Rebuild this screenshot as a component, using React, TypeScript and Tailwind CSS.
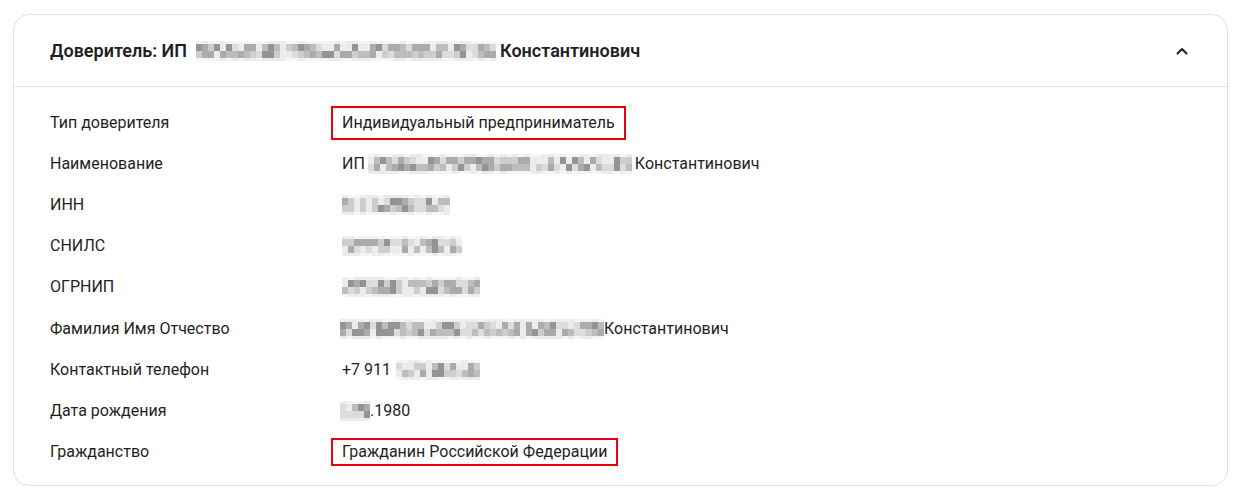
import React from 'react';

// pseudo-random shades for the pixelated (hidden) fragments
const shades = ['bg-[#f5f5f5]', 'bg-[#ececec]', 'bg-[#dcdcdc]', 'bg-[#cdcdcd]', 'bg-[#bdbdbd]', 'bg-[#ababab]', 'bg-[#949494]'];

const rand = (seed: number) => {
    const x = Math.sin(seed * 12.9898 + 78.233) * 43758.5453;
    return x - Math.floor(x);
};

const bands = [
    { h: 'h-[3px]', from: 0, span: 2 },
    { h: 'h-[7px]', from: 1, span: 6 },
    { h: 'h-[7px]', from: 1, span: 6 },
    { h: 'h-[3px]', from: 0, span: 2 },
];

const Mosaic: React.FC<{ width: number; seed: number; className?: string }> = ({ width, seed, className }) => {
    const cols = Math.round(width / 6);
    return (
        <span className={`inline-flex flex-col align-middle ${className ?? ''}`}>
            {bands.map((band, r) => (
                <span key={r} className="flex">
                    {Array.from({ length: cols }).map((_, c) => {
                        const v = rand(seed * 1000 + r * 97 + c);
                        const idx = Math.min(shades.length - 1, band.from + Math.floor(v * band.span));
                        return <span key={c} className={`w-[6px] ${band.h} ${shades[idx]}`} />;
                    })}
                </span>
            ))}
        </span>
    );
};

const ChevronUp = () => (
    <svg width="14" height="14" viewBox="0 0 14 14" fill="none">
        <path d="M2.5 9.5L7 5L11.5 9.5" stroke="#1f1f22" strokeWidth="2" strokeLinecap="round" strokeLinejoin="round" />
    </svg>
);

const Marked: React.FC<{ children: React.ReactNode; tall?: boolean }> = ({ children, tall }) => (
    <span className={`-ml-[11px] border-2 border-[#e8000b] px-[9px] ${tall ? 'py-[3px]' : 'py-0'}`}>{children}</span>
);

const App: React.FC = () => {
    const rows: { label: string; value: React.ReactNode }[] = [
        { label: 'Тип доверителя', value: <Marked tall>Индивидуальный предприниматель</Marked> },
        { label: 'Наименование', value: <span className="flex items-center">ИП<Mosaic width={266} seed={2} className="ml-[3px] mr-[3px]" />Константинович</span> },
        { label: 'ИНН', value: <Mosaic width={110} seed={3} /> },
        { label: 'СНИЛС', value: <Mosaic width={121} seed={4} /> },
        { label: 'ОГРНИП', value: <Mosaic width={140} seed={5} /> },
        { label: 'Фамилия Имя Отчество', value: <span className="flex items-center"><Mosaic width={266} seed={6} className="-ml-[2px]" />Константинович</span> },
        { label: 'Контактный телефон', value: <span className="flex items-center">+7 911<Mosaic width={81} seed={7} className="ml-[5px]" /></span> },
        { label: 'Дата рождения', value: <span className="flex items-center"><Mosaic width={30} seed={8} className="-ml-[2px]" />.1980</span> },
        { label: 'Гражданство', value: <Marked>Гражданин Российской Федерации</Marked> },
    ];

    return (
        <div className="bg-white min-h-screen pt-[14px] pl-[13px] text-[#1f1f22]" style={{ fontFamily: 'Roboto, "Noto Sans", sans-serif' }}>
            <div className="w-[1215px] h-[472px] border border-[#dde1e6] rounded-[16px] flex flex-col">
                <div className="h-[72px] shrink-0 flex items-center justify-between pl-[36px] pr-[38px] border-b border-[#dde1e6]">
                    <h2 className="text-[18px] font-semibold flex items-center">
                        Доверитель: ИП
                        <Mosaic width={298} seed={1} className="ml-[9px] mr-[4px]" />
                        Константинович
                    </h2>
                    <ChevronUp />
                </div>
                <div className="pt-[15px] pl-[36px]">
                    {rows.map(row => (
                        <div key={row.label} className="grid grid-cols-[292px_1fr] h-[41.2px] items-center text-[16px] leading-[24px]">
                            <div>{row.label}</div>
                            <div className="flex items-center">{row.value}</div>
                        </div>
                    ))}
                </div>
            </div>
        </div>
    );
};

export default App;
